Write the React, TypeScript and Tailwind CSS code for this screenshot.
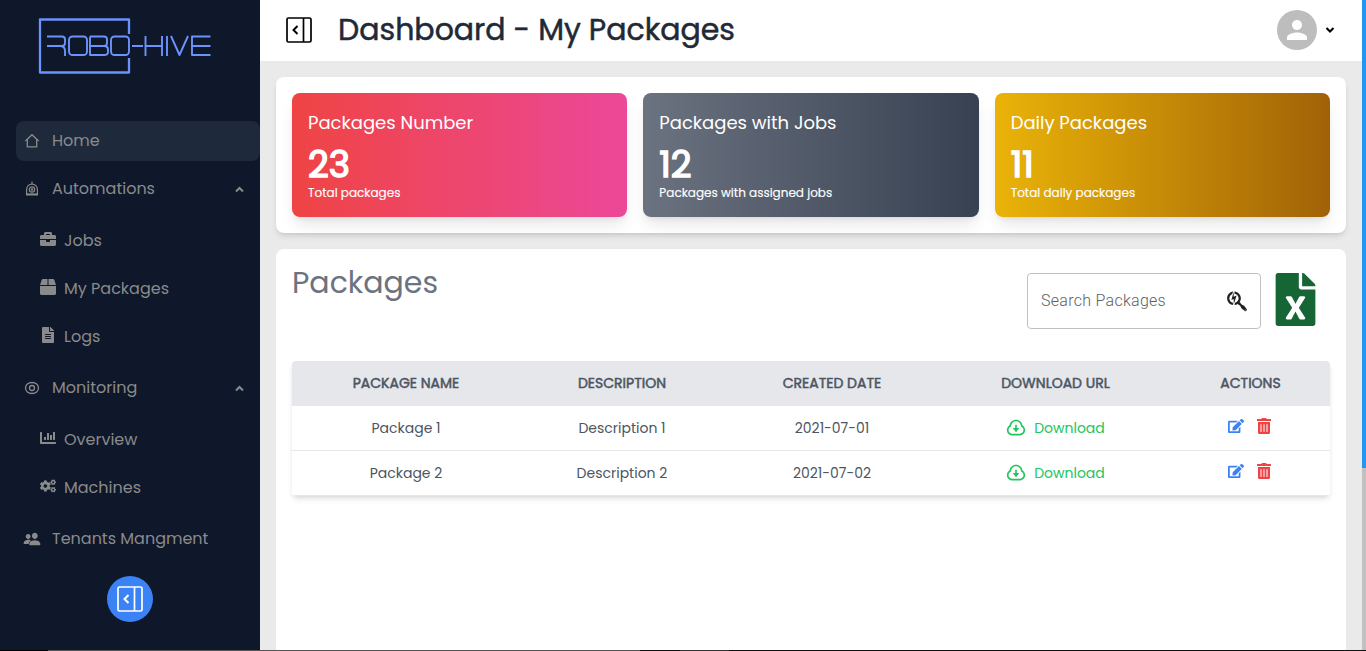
import React from "react";
import { FaBriefcase, FaBox, FaFileAlt, FaChartBar, FaCogs, FaSearchengin, FaFileExcel, FaEdit, FaTrashAlt } from "react-icons/fa";
import { RiDownloadCloudLine } from "react-icons/ri";
import { IoPeople } from "react-icons/io5";

const HomeIcon = () => (
  <svg width="16" height="16" viewBox="0 0 16 16" fill="none" stroke="currentColor" strokeWidth="1.3">
    <path d="M1.4 8 8 1.7 14.6 8M3.3 6.5v7.4h9.4V6.5" />
  </svg>
);

const RobotIcon = () => (
  <svg width="16" height="16" viewBox="0 0 16 16" fill="none" stroke="currentColor" strokeWidth="1.2">
    <path d="M8 .5v3M2.600 14V8.500a5.400 5.400 0 0 1 10.800 0V14z" />
    <path d="M3 13.200h10" strokeWidth="1.600" />
    <circle cx="8" cy="8.500" r="2.700" />
    <circle cx="8" cy="8.500" r=".6" />
  </svg>
);

const EyeIcon = () => (
  <svg width="16" height="16" viewBox="0 0 16 16" fill="none" stroke="currentColor" strokeWidth="1.3">
    <path d="M8 2.500c3.800 0 6.500 2.400 6.500 5.500S11.800 13.500 8 13.500 1.500 11.100 1.500 8 4.200 2.500 8 2.500z" />
    <circle cx="8" cy="8" r="2.500" />
  </svg>
);

const Chevron = ({ down = false }: { down?: boolean }) => (
  <svg width="10" height="8" viewBox="0 0 10 8" fill="none" stroke="currentColor" strokeWidth="2">
    <path d={down ? "M1.500 2 5 5.500 8.500 2" : "M2 6.500 5.500 3 9 6.500"} />
  </svg>
);

const PanelIcon = () => (
  <svg width="26" height="26" viewBox="0 0 26 26" fill="none" stroke="currentColor" strokeWidth="1.700">
    <rect x="1" y="1" width="24" height="24" rx="1.500" />
    <path d="M17.500 1v24" />
    <path d="M11.500 9 7.500 13l4 4" strokeWidth="2" />
  </svg>
);

const Logo = () => (
  <svg width="174" height="58" viewBox="38 17 174 58" fill="none" stroke="#6b93fb" strokeWidth="1.900" strokeLinejoin="round">
    <path d="M129 34V19.500H40V72.500H129V58" strokeWidth="2.300" />
    <path d="M47 36.500H62Q65 36.500 65 39.500V43Q65 46 62 46H47M60 46Q65 46 65 51V56" />
    <rect x="69" y="36.500" width="18" height="18.500" rx="3.500" />
    <path d="M90 36.500H104Q107 36.500 107 39.500V43Q107 46 104 46H90M104 46Q108 46 108 49.500V52Q108 55 104 55H90V36.500" />
    <rect x="111" y="36.500" width="18" height="18.500" rx="3.500" />
    <path d="M132 46H143M145.500 36V56M145.500 46H162M162 36V56M167 36V56M171 36 179.500 55 188 36M210.500 36.500H192V55H210.500M192 46H210.500" />
  </svg>
);

const stats = [
  { title: "Packages Number", value: "23", note: "Total packages", bg: "from-[#ef4444] to-[#ec4899]" },
  { title: "Packages with Jobs", value: "12", note: "Packages with assigned jobs", bg: "from-[#6b7280] to-[#374151]" },
  { title: "Daily Packages", value: "11", note: "Total daily packages", bg: "from-[#eab308] to-[#a16207]" },
];

const rows = [
  { name: "Package 1", description: "Description 1", date: "2021-07-01" },
  { name: "Package 2", description: "Description 2", date: "2021-07-02" },
];

const cols = "grid grid-cols-[228px_204px_216px_231px_159px] text-center";

function SubItem({ icon, label, top }: { icon: React.ReactNode; label: string; top: string }) {
  return (
    <div className={`flex h-6 items-center gap-2 pl-10 ${top}`}>
      <span className="mb-0.5 flex h-5 w-4 items-center justify-center pb-0.5">{icon}</span>
      <span>{label}</span>
    </div>
  );
}

function Sidebar() {
  return (
    <aside className="flex h-full w-[260px] shrink-0 flex-col bg-[#0f172a] text-base leading-6 text-[#8a8a8a]">
      <div className="pt-[17px] pl-[38px]"><Logo /></div>
      <div className="mt-[46px] ml-4 flex h-10 items-center gap-3 rounded-lg bg-[#1e293b] pl-2">
        <HomeIcon />
        <span>Home</span>
      </div>
      <div className="mt-4 flex h-6 items-center gap-3 pr-4 pl-6">
        <RobotIcon />
        <span className="flex-1">Automations</span>
        <Chevron />
      </div>
      <SubItem top="mt-7" icon={<FaBriefcase size={16} />} label="Jobs" />
      <SubItem top="mt-6" icon={<FaBox size={16} />} label="My Packages" />
      <SubItem top="mt-6" icon={<FaFileAlt size={16} />} label="Logs" />
      <div className="mt-[27px] flex h-6 items-center gap-3 pr-4 pl-6">
        <EyeIcon />
        <span className="flex-1">Monitoring</span>
        <Chevron />
      </div>
      <SubItem top="mt-7" icon={<FaChartBar size={16} />} label="Overview" />
      <SubItem top="mt-6" icon={<FaCogs size={16} />} label="Machines" />
      <div className="mt-[27px] flex h-6 items-center gap-[11px] pl-[23px]">
        <IoPeople size={18} />
        <span>Tenants Mangment</span>
      </div>
      <button className="mt-[25px] flex h-[46px] w-[46px] items-center justify-center self-center rounded-full bg-[#3b82f6] text-white">
        <PanelIcon />
      </button>
    </aside>
  );
}

export default function App() {
  return (
    <div className="flex h-[651px] w-full flex-col overflow-hidden font-[Poppins,Inter,sans-serif]">
      <div className="flex h-[650px]">
        <Sidebar />
        <div className="flex min-w-0 flex-1 flex-col bg-[#eaeaea]">
          <header className="flex h-[61px] shrink-0 items-center bg-white pr-[27px] pb-px pl-[26px] text-black">
            <PanelIcon />
            <h1 className="ml-[26px] flex-1 text-[30px] leading-9 font-normal text-[#1f2937] [-webkit-text-stroke:0.5px]">Dashboard - My Packages</h1>
            <div className="flex h-10 w-10 items-center justify-center rounded-full bg-[#bdbdbd]">
              <svg width="30" height="30" viewBox="0 0 24 24" fill="white"><path d="M12 12c2.210 0 4-1.790 4-4s-1.790-4-4-4-4 1.790-4 4 1.790 4 4 4zm0 2c-2.670 0-8 1.340-8 4v2h16v-2c0-2.660-5.330-4-8-4z" /></svg>
            </div>
            <span className="ml-2"><Chevron down /></span>
          </header>
          <main className="flex min-h-0 flex-1 flex-col gap-4 px-4 pt-4">
            <section className="grid h-[156px] shrink-0 grid-cols-3 gap-4 rounded-lg bg-white p-4 shadow-md">
              {stats.map((s) => (
                <div key={s.title} className={`flex flex-col rounded-lg bg-linear-to-r/srgb px-4 pt-4 text-white shadow-lg ${s.bg}`}>
                  <span className="text-lg leading-7">{s.title}</span>
                  <span className="mt-2 text-4xl leading-10 font-normal [-webkit-text-stroke:1.500px]">{s.value}</span>
                  <span className="text-xs leading-4 [-webkit-text-stroke:0.15px]">{s.note}</span>
                </div>
              ))}
            </section>
            <section className="flex min-h-0 flex-1 flex-col rounded-t-lg bg-white px-4 pt-4">
              <div className="flex h-24 items-start">
                <h2 className="flex-1 text-[30px] leading-9 font-normal text-[#6b7280]">Packages</h2>
                <div className="mt-2 flex h-14 w-[234px] items-center justify-between rounded border border-[#c0c0c0] pr-3 pl-[13px]">
                  <span className="font-[Roboto] text-base font-light tracking-[0.28px] text-[#616161]">Search Packages</span>
                  <FaSearchengin size={22} className="text-[#212121]" />
                </div>
                <FaFileExcel size={53} className="mt-2 mr-2 ml-2 text-[#166534]" />
              </div>
              <div className="shrink-0 overflow-hidden rounded text-sm text-[#4b5563] shadow-md">
                <div className={`${cols} h-[45px] items-center bg-[#e5e7eb] pb-0.5 font-normal [-webkit-text-stroke:0.5px]`}>
                  <span>PACKAGE NAME</span>
                  <span>DESCRIPTION</span>
                  <span>CREATED DATE</span>
                  <span>DOWNLOAD URL</span>
                  <span>ACTIONS</span>
                </div>
                {rows.map((r) => (
                  <div key={r.name} className={`${cols} h-[45px] items-center border-b border-[#e5e7eb] bg-white font-normal`}>
                    <span>{r.name}</span>
                    <span>{r.description}</span>
                    <span>{r.date}</span>
                    <span className="flex items-center justify-center gap-2 text-[#22c55e]">
                      <RiDownloadCloudLine size={20} />
                      <span>Download</span>
                    </span>
                    <span className="flex items-center justify-center gap-3 pr-px pb-1">
                      <FaEdit size={16} className="text-[#3b82f6]" />
                      <FaTrashAlt size={16} className="text-[#ef4444]" />
                    </span>
                  </div>
                ))}
              </div>
            </section>
          </main>
        </div>
        <div className="h-full w-1 shrink-0 bg-[#c1c1c1]">
          <div className="h-[468px] bg-[#2196f3]" />
        </div>
      </div>
      <div className="flex h-px bg-[#111111]">
        <div className="w-12 bg-black" />
        <div className="w-[592px] bg-[#555555]" />
        <div className="ml-10 w-[49px] bg-[#333333]" />
      </div>
    </div>
  );
}
